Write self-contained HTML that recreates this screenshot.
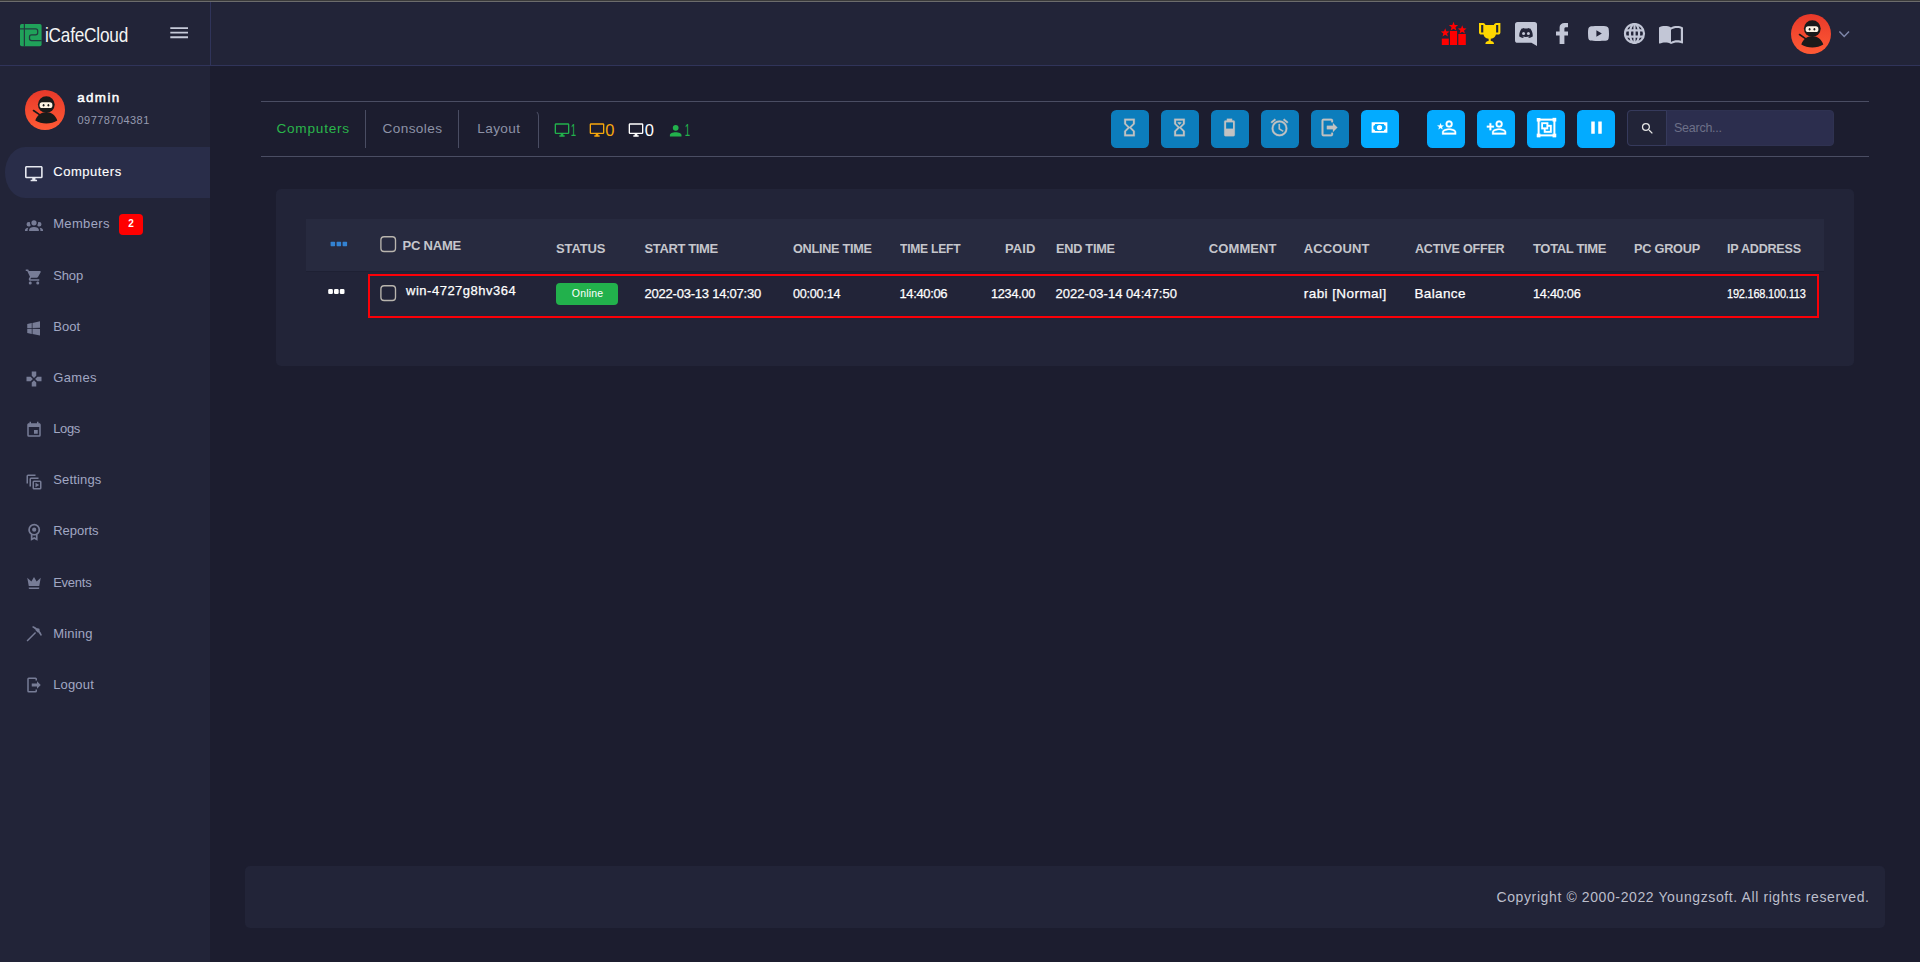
<!DOCTYPE html>
<html lang="en">
<head>
<meta charset="utf-8">
<title>iCafeCloud</title>
<style>
*{box-sizing:border-box;margin:0;padding:0}
html,body{width:1920px;height:962px;overflow:hidden}
body{background:#1c1d2f;font-family:"Liberation Sans",sans-serif;color:#fff;position:relative}
.abs{position:absolute}
.t{position:absolute;white-space:nowrap;line-height:1}
.ic{position:absolute;display:block;overflow:visible}
</style>
</head>
<body>
<div class="abs" style="left:0px;top:0px;width:1920px;height:66px;background:#222438;border-bottom:1px solid #30345a"></div>
<div class="abs" style="left:0px;top:0px;width:1920px;height:1px;background:#3a3a3a"></div>
<div class="abs" style="left:0px;top:1px;width:1920px;height:1px;background:#6c6c6c"></div>
<div class="abs" style="left:0px;top:2px;width:1920px;height:1px;background:#202238"></div>
<div class="abs" style="left:210px;top:2px;width:1px;height:64px;background:#30345a"></div>
<div class="abs" style="left:0px;top:66px;width:210px;height:896px;background:#222438"></div>
<header>
<svg class="ic" style="left:19.9px;top:23.9px" width="21.6" height="22.2" viewBox="0 0 21.6 22.2"><rect x="0" y="0" width="21.6" height="22.2" rx="1.8" fill="#20a25a"/><g stroke="#232a3a" stroke-width="1.25" fill="none" opacity="0.85"><path d="M4.4,0V22.2"/><path d="M0,5H15.6Q17.7,5 17.7,7.1V8.7Q17.7,10.8 15.6,10.8H11.6Q9.500,10.8 9.500,12.9V14.600Q9.500,16.700 11.6,16.700H21.6"/></g></svg>
<div class="t" style="left:44.60px;top:23.82px;font-size:21px;font-weight:400;color:#f4f4f4;letter-spacing:-0.250px;transform:scaleX(0.8189);transform-origin:0 0;">iCafeCloud</div>
<svg class="ic" style="left:170px;top:26px" width="19" height="14" viewBox="0 0 19 14"><path fill="#c6cad9" d="M0.3,1.2h17.7v1.8h-17.7zM0.3,5.800h17.7v1.800h-17.7zM0.3,10.350h17.7v1.800h-17.7z"/></svg>
<svg class="ic" style="left:1441px;top:21px" width="26" height="25" viewBox="0 0 26 25"><g fill="#ff0000"><rect x="0.8" y="17.6" width="7" height="6.4"/><rect x="9" y="10" width="7.1" height="14"/><rect x="17.3" y="13" width="7.5" height="11"/><polygon points="4.20,7.30 5.34,10.34 8.57,10.48 6.04,12.50 6.90,15.62 4.20,13.83 1.50,15.62 2.36,12.50 -0.17,10.48 3.06,10.34"/><polygon points="12.50,0.70 13.71,3.94 17.16,4.09 14.46,6.24 15.38,9.56 12.50,7.66 9.62,9.56 10.54,6.24 7.84,4.09 11.29,3.94"/><polygon points="21.20,4.30 22.34,7.34 25.57,7.48 23.04,9.50 23.90,12.62 21.20,10.83 18.50,12.62 19.36,9.50 16.83,7.48 20.06,7.34"/></g></svg>
<svg class="ic" style="left:1479px;top:23px" width="21.4" height="21" viewBox="2 2 20 20" preserveAspectRatio="none"><path fill="#ffd700" d="M20.2,2H19.5H18C17.1,2 16,3 16,4H8C8,3 6.9,2 6,2H4.5H3.8H2V11C2,12 3,13 4,13H6.2C6.6,15 7.9,16.7 11,17V19.1C8.8,19.3 8,20.4 8,21.7V22H16V21.7C16,20.4 15.2,19.3 13,19.1V17C16.1,16.7 17.4,15 17.8,13H20C21,13 22,12 22,11V2H20.2M4,11V4H6V6V11C5.1,11 4.3,11 4,11M20,11C19.7,11 18.9,11 18,11V6V4H20V11Z"/></svg>
<svg class="ic" style="left:1515px;top:22px" width="22" height="24" viewBox="0 0 22 24"><path fill="#c2c6d6" d="M2.6,0H19.4A2.6,2.6 0 0,1 22,2.6V24L16.4,20.8H2.6A2.6,2.6 0 0,1 0,18.200V2.6A2.6,2.6 0 0,1 2.600,0Z"/><g transform="translate(11 0) scale(1.1 1) translate(-11 0)"><path fill="#222438" d="M14.9,6.600C13.9,6.100 12.800,5.900 12.800,5.900L12.500,6.500C11.500,6.350 10.500,6.350 9.500,6.500L9.200,5.900C9.200,5.900 8.100,6.100 7.100,6.600C5.300,9.300 4.700,12 4.900,14.600C6.100,15.500 7.300,15.900 8.300,16.100L9,15C8.500,14.800 8,14.600 7.600,14.300C9.700,15.300 12.300,15.300 14.400,14.300C14,14.600 13.500,14.800 13,15L13.700,16.100C14.700,15.900 15.900,15.500 17.100,14.600C17.300,12 16.700,9.300 14.900,6.600Z"/><ellipse cx="8.8" cy="11.4" rx="1.35" ry="1.5" fill="#c2c6d6"/><ellipse cx="13.2" cy="11.4" rx="1.35" ry="1.5" fill="#c2c6d6"/></g></svg>
<svg class="ic" style="left:1556px;top:23px" width="12" height="21" viewBox="7 2 10 20" preserveAspectRatio="none"><path fill="#c2c6d6" d="M17,2V2H17V6H15C14.31,6 14,6.81 14,7.5V10H14L17,10V14H14V22H10V14H7V10H10V6A4,4 0 0,1 14,2H17Z"/></svg>
<svg class="ic" style="left:1588px;top:26px" width="21" height="15" viewBox="2 5 20 14" preserveAspectRatio="none"><path fill="#c2c6d6" d="M10,15L15.19,12L10,9V15M21.56,7.17C21.69,7.64 21.78,8.27 21.84,9.07C21.91,9.87 21.94,10.56 21.94,11.16L22,12C22,14.19 21.84,15.8 21.56,16.83C21.31,17.73 20.73,18.31 19.83,18.56C19.36,18.69 18.5,18.78 17.18,18.84C15.88,18.91 14.69,18.94 13.59,18.94L12,19C7.81,19 5.2,18.84 4.17,18.56C3.27,18.31 2.69,17.73 2.44,16.83C2.31,16.36 2.22,15.73 2.16,14.93C2.09,14.13 2.06,13.44 2.06,12.84L2,12C2,9.81 2.16,8.2 2.44,7.17C2.69,6.27 3.27,5.69 4.17,5.44C4.64,5.31 5.5,5.22 6.82,5.16C8.12,5.09 9.31,5.06 10.41,5.06L12,5C16.19,5 18.8,5.16 19.83,5.44C20.73,5.69 21.31,6.27 21.56,7.17Z"/></svg>
<svg class="ic" style="left:1624px;top:23px" width="21" height="21" viewBox="0 0 21 21"><g fill="none" stroke="#c2c6d6" stroke-width="2.2"><circle cx="10.500" cy="10.500" r="9.500"/><ellipse cx="10.500" cy="10.500" rx="4.600" ry="9.500"/><path d="M10.500,1V20M1.800,7.300H19.200M1.800,13.700H19.200"/></g></svg>
<svg class="ic" style="left:1659px;top:26px" width="24" height="18" viewBox="1 4.5 22 17" preserveAspectRatio="none"><path fill="#c2c6d6" d="M21,5C19.89,4.65 18.67,4.5 17.5,4.5C15.55,4.5 13.45,4.9 12,6C10.55,4.9 8.45,4.5 6.5,4.5C4.55,4.5 2.45,4.9 1,6V20.65C1,20.9 1.25,21.15 1.5,21.15C1.6,21.15 1.65,21.1 1.75,21.1C3.1,20.45 5.05,20 6.5,20C8.45,20 10.55,20.4 12,21.5C13.35,20.65 15.8,20 17.5,20C19.15,20 20.85,20.3 22.25,21.05C22.35,21.1 22.4,21.1 22.5,21.1C22.75,21.1 23,20.85 23,20.6V6C22.4,5.55 21.75,5.25 21,5M21,18.5C19.9,18.15 18.7,18 17.5,18C15.8,18 13.35,18.65 12,19.5V8C13.35,7.15 15.8,6.5 17.5,6.5C18.7,6.5 19.9,6.65 21,7V18.5Z"/></svg>
<svg class="ic" style="left:1791px;top:14px" width="40" height="40" viewBox="0 0 40 40"><defs><linearGradient id="g2" x1="0" y1="0" x2="0" y2="1"><stop offset="0" stop-color="#e8392a"/><stop offset="1" stop-color="#ff5a35"/></linearGradient></defs><circle cx="20" cy="20" r="20" fill="url(#g2)"/><path d="M8.5 20.5l6 4.2" stroke="#1a1a1a" stroke-width="1.6" stroke-linecap="round"/><circle cx="21.3" cy="14.6" r="8.4" fill="#1a1a1a"/><path d="M10.3 30.5c1.5-5 5.5-8.3 11-8.3s9.5 3.3 11 8.3c-3 2-7 3-11 3s-8-1-11-3z" fill="#1a1a1a"/><rect x="14.6" y="12.3" width="12.8" height="5.8" rx="2.6" fill="#fdf3e3"/><ellipse cx="18.6" cy="15.2" rx="0.9" ry="1.2" fill="#1a1a1a"/><ellipse cx="23.4" cy="15.2" rx="0.9" ry="1.2" fill="#1a1a1a"/></svg>
<svg class="ic" style="left:1838px;top:30px" width="12" height="8" viewBox="0 0 12 8"><path d="M1.4,1.500L6.200,6.400L11,1.500" fill="none" stroke="#7e86a9" stroke-width="1.5"/></svg>
</header>
<aside>
<svg class="ic" style="left:25px;top:90px" width="40" height="40" viewBox="0 0 40 40"><defs><linearGradient id="g1" x1="0" y1="0" x2="0" y2="1"><stop offset="0" stop-color="#e8392a"/><stop offset="1" stop-color="#ff5a35"/></linearGradient></defs><circle cx="20" cy="20" r="20" fill="url(#g1)"/><path d="M8.5 20.5l6 4.2" stroke="#1a1a1a" stroke-width="1.6" stroke-linecap="round"/><circle cx="21.3" cy="14.6" r="8.4" fill="#1a1a1a"/><path d="M10.3 30.5c1.5-5 5.5-8.3 11-8.3s9.5 3.3 11 8.3c-3 2-7 3-11 3s-8-1-11-3z" fill="#1a1a1a"/><rect x="14.6" y="12.3" width="12.8" height="5.8" rx="2.6" fill="#fdf3e3"/><ellipse cx="18.6" cy="15.2" rx="0.9" ry="1.2" fill="#1a1a1a"/><ellipse cx="23.4" cy="15.2" rx="0.9" ry="1.2" fill="#1a1a1a"/></svg>
<div class="t" style="left:77.20px;top:91.46px;font-size:13.4px;font-weight:400;color:#ffffff;letter-spacing:1.396px;-webkit-text-stroke:0.5px #fff;">admin</div>
<div class="t" style="left:77.50px;top:114.69px;font-size:11px;font-weight:400;color:#969aaf;letter-spacing:0.448px;">09778704381</div>
<div class="abs" style="left:5px;top:146.8px;width:205px;height:51.3px;background:#292d49;border-radius:20px 0 0 20px / 25.600px 0 0 25.600px"></div>
<div class="t" style="left:53.20px;top:165.10px;font-size:13px;font-weight:400;color:#ffffff;letter-spacing:0.554px;-webkit-text-stroke:0.12px #fff;">Computers</div>
<svg class="ic" style="left:25.2px;top:165.700px" width="17.7" height="15.2" viewBox="1 2 22 20" preserveAspectRatio="none"><path fill="#e6e8f0" d="M21,16H3V4H21M21,2H3C1.89,2 1,2.89 1,4V16A2,2 0 0,0 3,18H10V20H8V22H16V20H14V18H21A2,2 0 0,0 23,16V4C23,2.89 22.1,2 21,2Z"/></svg>
<div class="t" style="left:53.20px;top:217.30px;font-size:13px;font-weight:400;color:#a1a7c3;letter-spacing:0.348px;">Members</div>
<svg class="ic" style="left:25.00px;top:215.70px;" width="18" height="18" viewBox="0 0 24 24"><path fill="#777c96" d="M12,5.5A3.5,3.5 0 0,1 15.5,9A3.5,3.5 0 0,1 12,12.5A3.5,3.5 0 0,1 8.5,9A3.5,3.5 0 0,1 12,5.5M5,8C5.56,8 6.08,8.15 6.53,8.42C6.38,9.85 6.8,11.27 7.66,12.38C7.16,13.34 6.16,14 5,14A3,3 0 0,1 2,11A3,3 0 0,1 5,8M19,8A3,3 0 0,1 22,11A3,3 0 0,1 19,14C17.84,14 16.84,13.34 16.34,12.38C17.2,11.27 17.62,9.85 17.47,8.42C17.92,8.15 18.44,8 19,8M5.5,18.25C5.5,16.18 8.41,14.5 12,14.5C15.59,14.5 18.5,16.18 18.5,18.25V20H5.5V18.25M0,20V18.5C0,17.11 1.89,15.94 4.45,15.6C3.86,16.28 3.5,17.22 3.5,18.25V20H0M24,20H20.5V18.25C20.5,17.22 20.14,16.28 19.55,15.6C22.11,15.94 24,17.11 24,18.5V20Z"/></svg>
<div class="t" style="left:53.20px;top:269.30px;font-size:13px;font-weight:400;color:#a1a7c3;letter-spacing:-0.118px;">Shop</div>
<svg class="ic" style="left:25.00px;top:268.30px;" width="18" height="18" viewBox="0 0 24 24"><path fill="#777c96" d="M17,18C15.89,18 15,18.89 15,20A2,2 0 0,0 17,22A2,2 0 0,0 19,20C19,18.89 18.1,18 17,18M1,2V4H3L6.6,11.59L5.24,14.04C5.09,14.32 5,14.65 5,15A2,2 0 0,0 7,17H19V15H7.42A0.25,0.25 0 0,1 7.17,14.75C7.17,14.7 7.18,14.66 7.2,14.63L8.1,13H15.55C16.3,13 16.96,12.58 17.3,11.97L20.88,5.5C20.95,5.34 21,5.17 21,5A1,1 0 0,0 20,4H5.21L4.27,2M7,18C5.89,18 5,18.89 5,20A2,2 0 0,0 7,22A2,2 0 0,0 9,20C9,18.89 8.1,18 7,18Z"/></svg>
<div class="t" style="left:53.20px;top:320.10px;font-size:13px;font-weight:400;color:#a1a7c3;letter-spacing:0.028px;">Boot</div>
<svg class="ic" style="left:25.00px;top:318.60px;" width="18" height="18" viewBox="0 0 24 24"><path fill="#777c96" d="M3,12V6.75L9,5.43V11.91L3,12M20,3V11.75L10,11.9V5.21L20,3M3,13L9,13.09V19.9L3,18.75V13M20,13.25V22L10,20.09V13.1L20,13.25Z"/></svg>
<div class="t" style="left:53.20px;top:371.20px;font-size:13px;font-weight:400;color:#a1a7c3;letter-spacing:0.344px;">Games</div>
<svg class="ic" style="left:25.00px;top:370.20px;" width="18" height="18" viewBox="0 0 24 24"><path fill="#777c96" d="M16.5,9L13.5,12L16.5,15H22V9M9,16.5V22H15V16.5L12,13.5M7.5,9H2V15H7.5L10.5,12M15,7.5V2H9V7.5L12,10.5L15,7.5Z"/></svg>
<div class="t" style="left:53.20px;top:422.30px;font-size:13px;font-weight:400;color:#a1a7c3;letter-spacing:-0.370px;">Logs</div>
<svg class="ic" style="left:25.00px;top:421.10px;" width="18" height="18" viewBox="0 0 24 24"><path fill="#777c96" d="M19,19H5V8H19M16,1V3H8V1H6V3H5C3.89,3 3,3.89 3,5V19A2,2 0 0,0 5,21H19A2,2 0 0,0 21,19V5C21,3.89 20.1,3 19,3H18V1M17,12H12V17H17V12Z"/></svg>
<div class="t" style="left:53.20px;top:473.20px;font-size:13px;font-weight:400;color:#a1a7c3;letter-spacing:0.158px;">Settings</div>
<svg class="ic" style="left:25.00px;top:472.70px;" width="18" height="18" viewBox="0 0 24 24"><path fill="#777c96" d="M4,2A2,2 0 0,0 2,4V14H4V4H14V2H4M8,6A2,2 0 0,0 6,8V18H8V8H18V6H8M12,10A2,2 0 0,0 10,12V20A2,2 0 0,0 12,22H20A2,2 0 0,0 22,20V12A2,2 0 0,0 20,10H12M12,12H20V20H12V12M14,13V19L19,16L14,13Z"/></svg>
<div class="t" style="left:53.20px;top:524.30px;font-size:13px;font-weight:400;color:#a1a7c3;letter-spacing:-0.033px;">Reports</div>
<svg class="ic" style="left:23.90px;top:522.40px;" width="20.4" height="20.4" viewBox="0 0 24 24"><path fill="#777c96" d="M12,2A7,7 0 0,0 5,9C5,11.38 6.19,13.47 8,14.74V22L12,20L16,22V14.74C17.81,13.47 19,11.38 19,9A7,7 0 0,0 12,2M12,4A5,5 0 0,1 17,9A5,5 0 0,1 12,14A5,5 0 0,1 7,9A5,5 0 0,1 12,4M12,6.5A2.5,2.5 0 0,0 9.5,9A2.5,2.5 0 0,0 12,11.5A2.5,2.5 0 0,0 14.500,9A2.5,2.5 0 0,0 12,6.5M10,15.71C10.63,15.9 11.3,16 12,16C12.7,16 13.37,15.9 14,15.71V18.76L12,17.76L10,18.76V15.71Z"/></svg>
<div class="t" style="left:53.20px;top:575.60px;font-size:13px;font-weight:400;color:#a1a7c3;letter-spacing:-0.243px;">Events</div>
<svg class="ic" style="left:25.00px;top:573.90px;" width="18" height="18" viewBox="0 0 24 24"><path fill="#777c96" d="M5,16L3,5L8.5,10L12,4L15.5,10L21,5L19,16H5M19,19A1,1 0 0,1 18,20H6A1,1 0 0,1 5,19V18H19V19Z"/></svg>
<div class="t" style="left:53.20px;top:627.00px;font-size:13px;font-weight:400;color:#a1a7c3;letter-spacing:0.203px;">Mining</div>
<svg class="ic" style="left:25.00px;top:625.00px;" width="18" height="18" viewBox="0 0 24 24"><path fill="#777c96" d="M14.79,10.62L3.5,21.9L2.1,20.5L13.38,9.21L14.79,10.62M19.27,7.73L19.86,7.14L19.07,6.35L19.71,5.71L18.29,4.29L17.65,4.93L16.86,4.14L16.27,4.73C14.53,3.31 12.57,2.17 10.47,1.37L9.64,3.16C11.39,4.08 13,5.19 14.5,6.5L14,7L17,10L17.5,9.5C18.81,11 19.92,12.61 20.84,14.36L22.63,13.53C21.83,11.43 20.69,9.47 19.27,7.73Z"/></svg>
<div class="t" style="left:53.20px;top:678.20px;font-size:13px;font-weight:400;color:#a1a7c3;letter-spacing:0.164px;">Logout</div>
<svg class="ic" style="left:25.00px;top:676.30px;" width="18" height="18" viewBox="0 0 24 24"><path fill="#777c96" d="M16,17V14H9V10H16V7L21,12L16,17M14,2A2,2 0 0,1 16,4V6H14V4H5V20H14V18H16V20A2,2 0 0,1 14,22H5A2,2 0 0,1 3,20V4A2,2 0 0,1 5,2H14Z"/></svg>
<div class="abs" style="left:119px;top:214px;width:24px;height:20.5px;background:#ff0000;border-radius:4px"></div>
<div class="t" style="left:128.30px;top:219.13px;font-size:10px;font-weight:700;color:#ffffff;letter-spacing:0.000px;">2</div>
</aside>
<main>
<div class="abs" style="left:261px;top:101px;width:1608px;height:1px;background:#4a4d63"></div>
<div class="abs" style="left:261px;top:156px;width:1608px;height:1px;background:#4a4d63"></div>
<div class="t" style="left:276.40px;top:121.79px;font-size:13.6px;font-weight:400;color:#2ab54b;letter-spacing:0.787px;">Computers</div>
<div class="abs" style="left:365px;top:110px;width:1px;height:38px;background:#4a4d63"></div>
<div class="t" style="left:382.60px;top:121.79px;font-size:13.6px;font-weight:400;color:#8d92a6;letter-spacing:0.384px;">Consoles</div>
<div class="abs" style="left:458px;top:110px;width:1px;height:38px;background:#4a4d63"></div>
<div class="t" style="left:477.30px;top:121.79px;font-size:13.6px;font-weight:400;color:#8d92a6;letter-spacing:0.366px;">Layout</div>
<div class="abs" style="left:530px;top:110px;width:9px;height:38px;border-right:1px solid #4a4d63;border-top:1px solid transparent;border-top-right-radius:6px"></div>
<svg class="ic" style="left:553.63px;top:121.90px;" width="16" height="16" viewBox="0 0 24 24"><path fill="#22b14c" d="M21,16H3V4H21M21,2H3C1.89,2 1,2.89 1,4V16A2,2 0 0,0 3,18H10V20H8V22H16V20H14V18H21A2,2 0 0,0 23,16V4C23,2.89 22.1,2 21,2Z"/></svg>
<div class="t" style="left:569.90px;top:122.23px;font-size:16.5px;font-weight:400;color:#22b14c;letter-spacing:0.000px;transform:scaleX(0.58);transform-origin:1.8px 0;">1</div>
<svg class="ic" style="left:588.53px;top:121.90px;" width="16" height="16" viewBox="0 0 24 24"><path fill="#f7a70c" d="M21,16H3V4H21M21,2H3C1.89,2 1,2.89 1,4V16A2,2 0 0,0 3,18H10V20H8V22H16V20H14V18H21A2,2 0 0,0 23,16V4C23,2.89 22.1,2 21,2Z"/></svg>
<div class="t" style="left:605.30px;top:122.23px;font-size:16.5px;font-weight:400;color:#f7a70c;letter-spacing:0.000px;">0</div>
<svg class="ic" style="left:628.03px;top:121.90px;" width="16" height="16" viewBox="0 0 24 24"><path fill="#ffffff" d="M21,16H3V4H21M21,2H3C1.89,2 1,2.89 1,4V16A2,2 0 0,0 3,18H10V20H8V22H16V20H14V18H21A2,2 0 0,0 23,16V4C23,2.89 22.1,2 21,2Z"/></svg>
<div class="t" style="left:644.80px;top:122.23px;font-size:16.5px;font-weight:400;color:#ffffff;letter-spacing:0.000px;">0</div>
<svg class="ic" style="left:667.10px;top:121.50px;" width="17.4" height="17.4" viewBox="0 0 24 24"><path fill="#22b14c" d="M12,4A4,4 0 0,1 16,8A4,4 0 0,1 12,12A4,4 0 0,1 8,8A4,4 0 0,1 12,4M12,14C16.42,14 20,15.79 20,18V20H4V18C4,15.79 7.58,14 12,14Z"/></svg>
<div class="t" style="left:684.00px;top:122.23px;font-size:16.5px;font-weight:400;color:#22b14c;letter-spacing:0.000px;transform:scaleX(0.58);transform-origin:1.8px 0;">1</div>
<div class="abs" style="left:1111px;top:110px;width:38px;height:38px;background:#0c7dbc;border-radius:5.5px"></div>
<svg class="ic" style="left:1119.00px;top:117.2px" width="21" height="21" viewBox="0 0 24 24"><path fill="#c2c2c2" stroke="#c2c2c2" stroke-width="0.3" d="M6,2V8H6V8L10,12L6,16V16H6V22H18V16H18V16L14,12L18,8V8H18V2H6M16,16.5V20H8V16.5L12,12.5L16,16.5M12,11.5L8,7.5V4H16V7.5L12,11.5Z"/></svg>
<div class="abs" style="left:1161px;top:110px;width:38px;height:38px;background:#0c7dbc;border-radius:5.5px"></div>
<svg class="ic" style="left:1169.00px;top:117.2px" width="21" height="21" viewBox="0 0 24 24"><path fill="#c2c2c2" stroke="#c2c2c2" stroke-width="0.3" d="M6,2V8H6V8L10,12L6,16V16H6V22H18V16H18V16L14,12L18,8V8H18V2H6M16,16.5V20H8V16.5L12,12.5L16,16.5M12,11.5L8,7.5V4H16V7.5L12,11.5M10,6V6.75L12,8.75L14,6.75V6H10Z"/></svg>
<div class="abs" style="left:1211px;top:110px;width:38px;height:38px;background:#0c7dbc;border-radius:5.5px"></div>
<svg class="ic" style="left:1219.00px;top:117.2px" width="21" height="21" viewBox="0 0 24 24"><path fill="#c2c2c2" stroke="#c2c2c2" stroke-width="0.3" d="M16,13.4H8V6H16M16.67,4H15V2H9V4H7.33A1.33,1.33 0 0,0 6,5.33V20.67C6,21.4 6.6,22 7.33,22H16.67A1.33,1.33 0 0,0 18,20.67V5.33C18,4.6 17.4,4 16.67,4Z"/></svg>
<div class="abs" style="left:1261px;top:110px;width:38px;height:38px;background:#0c7dbc;border-radius:5.5px"></div>
<svg class="ic" style="left:1269.10px;top:117.2px" width="21" height="21" viewBox="0 0 24 24"><path fill="#c2c2c2" stroke="#c2c2c2" stroke-width="0.3" d="M12,20A7,7 0 0,1 5,13A7,7 0 0,1 12,6A7,7 0 0,1 19,13A7,7 0 0,1 12,20M12,4A9,9 0 0,0 3,13A9,9 0 0,0 12,22A9,9 0 0,0 21,13A9,9 0 0,0 12,4M12.5,8H11V14L15.75,16.85L16.5,15.62L12.5,13.25V8M7.88,3.39L6.6,1.86L2,5.71L3.29,7.24L7.88,3.39M22,5.72L17.4,1.86L16.11,3.39L20.71,7.25L22,5.72Z"/></svg>
<div class="abs" style="left:1311px;top:110px;width:38px;height:38px;background:#0c7dbc;border-radius:5.5px"></div>
<svg class="ic" style="left:1319.10px;top:117.2px" width="21" height="21" viewBox="0 0 24 24"><path fill="#c2c2c2" stroke="#c2c2c2" stroke-width="0.3" d="M16,17V14H9V10H16V7L21,12L16,17M14,2A2,2 0 0,1 16,4V6H14V4H5V20H14V18H16V20A2,2 0 0,1 14,22H5A2,2 0 0,1 3,20V4A2,2 0 0,1 5,2H14Z"/></svg>
<div class="abs" style="left:1361px;top:110px;width:38px;height:38px;background:#03abff;border-radius:5.5px"></div>
<svg class="ic" style="left:1369.10px;top:117.2px" width="21" height="21" viewBox="0 0 24 24"><path fill="#ffffff" stroke="#ffffff" stroke-width="0" d="M3,6H21V18H3V6M12,9A3,3 0 0,1 15,12A3,3 0 0,1 12,15A3,3 0 0,1 9,12A3,3 0 0,1 12,9M7,8A2,2 0 0,1 5,10V14A2,2 0 0,1 7,16H17A2,2 0 0,1 19,14V10A2,2 0 0,1 17,8H7Z"/></svg>
<div class="abs" style="left:1427px;top:110px;width:38px;height:38px;background:#03abff;border-radius:5.5px"></div>
<svg class="ic" style="left:1435.80px;top:117.2px" width="21" height="21" viewBox="0 0 24 24"><path fill="#ffffff" stroke="#ffffff" stroke-width="0.3" d="M15,4A4,4 0 0,0 11,8A4,4 0 0,0 15,12A4,4 0 0,0 19,8A4,4 0 0,0 15,4M15,5.9C16.16,5.9 17.1,6.84 17.1,8C17.1,9.16 16.16,10.1 15,10.1A2.1,2.1 0 0,1 12.9,8A2.1,2.1 0 0,1 15,5.9M15,13C12.33,13 7,14.33 7,17V20H23V17C23,14.33 17.67,13 15,13M15,14.9C17.97,14.9 21.1,16.36 21.1,17V18.1H8.9V17C8.9,16.36 12,14.9 15,14.9ZM5.2,7.2L6.15,9.7L8.8,9.83L6.73,11.5L7.43,14.07L5.2,12.6L2.97,14.07L3.67,11.5L1.6,9.83L4.25,9.7Z"/></svg>
<div class="abs" style="left:1477px;top:110px;width:38px;height:38px;background:#03abff;border-radius:5.5px"></div>
<svg class="ic" style="left:1485.80px;top:117.2px" width="21" height="21" viewBox="0 0 24 24"><path fill="#ffffff" stroke="#ffffff" stroke-width="0.3" d="M15,4A4,4 0 0,0 11,8A4,4 0 0,0 15,12A4,4 0 0,0 19,8A4,4 0 0,0 15,4M15,5.9C16.16,5.9 17.1,6.84 17.1,8C17.1,9.16 16.16,10.1 15,10.1A2.1,2.1 0 0,1 12.9,8A2.1,2.1 0 0,1 15,5.9M15,13C12.33,13 7,14.33 7,17V20H23V17C23,14.33 17.67,13 15,13M15,14.9C17.97,14.9 21.1,16.36 21.1,17V18.1H8.9V17C8.9,16.36 12,14.9 15,14.9ZM4,7V10H1V12H4V15H6V12H9V10H6V7H4Z"/></svg>
<div class="abs" style="left:1527px;top:110px;width:38px;height:38px;background:#03abff;border-radius:5.5px"></div>
<svg class="ic" style="left:1535.80px;top:117.2px" width="21" height="21" viewBox="0 0 24 24"><path fill="#ffffff" stroke="#ffffff" stroke-width="0.3" d="M1,1V5H2V19H1V23H5V22H19V23H23V19H22V5H23V1H19V2H5V1M5,4H19V5H20V19H19V20H5V19H4V5H5M6,6V14H9V18H18V9H14V6M8,8H12V12H8M14,11H16V16H11V14H14"/></svg>
<div class="abs" style="left:1577px;top:110px;width:38px;height:38px;background:#03abff;border-radius:5.5px"></div>
<svg class="ic" style="left:1585.80px;top:117.2px" width="21" height="21" viewBox="0 0 24 24"><path fill="#ffffff" stroke="#ffffff" stroke-width="0" d="M14,19H18V5H14M6,19H10V5H6V19Z"/></svg>
<div class="abs" style="left:1627px;top:110px;width:207px;height:36px;background:#2c2e4e;border:1px solid #2f3251;border-radius:4px"></div>
<div class="abs" style="left:1627px;top:110px;width:39.5px;height:36px;background:#222438;border:1px solid #363a5c;border-radius:4px 0 0 4px"></div>
<svg class="ic" style="left:1639.60px;top:120.70px;" width="15" height="15" viewBox="0 0 24 24"><path fill="#e4e4e4" d="M9.5,3A6.5,6.5 0 0,1 16,9.5C16,11.11 15.41,12.59 14.44,13.73L14.71,14H15.5L20.5,19L19,20.5L14,15.5V14.71L13.73,14.44C12.59,15.41 11.11,16 9.5,16A6.5,6.5 0 0,1 3,9.5A6.5,6.5 0 0,1 9.5,3M9.5,5C7,5 5,7 5,9.5C5,12 7,14 9.5,14C12,14 14,12 14,9.5C14,7 12,5 9.5,5Z"/></svg>
<div class="t" style="left:1673.90px;top:121.30px;font-size:13px;font-weight:400;color:#6d7088;letter-spacing:-0.250px;transform:scaleX(0.9600);transform-origin:0 0;">Search...</div>
<div class="abs" style="left:276px;top:188.5px;width:1578px;height:177.5px;background:#222438;border-radius:5px"></div>
<div class="abs" style="left:306px;top:218.8px;width:1518px;height:52px;background:#272a3f"></div>
<div class="abs" style="left:306px;top:270.5px;width:1518px;height:1px;background:#1e2033"></div>
<svg class="ic" style="left:330px;top:241px" width="18" height="6" viewBox="0 0 18 6"><g fill="#3382d2"><rect x="0.6" y="0.8" width="4.5" height="4.4" rx="0.6"/><rect x="6.6" y="0.8" width="4.5" height="4.4" rx="0.6"/><rect x="12.6" y="0.8" width="4.5" height="4.4" rx="0.6"/></g></svg>
<svg class="ic" style="left:379px;top:234.9px" width="18" height="18" viewBox="0 0 18 18"><rect x="1.9" y="1.700" width="14.6" height="14.8" rx="3.2" fill="none" stroke="#b9b5ae" stroke-width="1.35"/></svg>
<svg class="ic" style="left:379px;top:284px" width="18" height="18" viewBox="0 0 18 18"><rect x="1.9" y="1.700" width="14.6" height="14.8" rx="3.2" fill="none" stroke="#b9b5ae" stroke-width="1.35"/></svg>
<div class="t" style="left:402.50px;top:239.00px;font-size:13px;font-weight:700;color:#c5c6cc;letter-spacing:-0.205px;">PC NAME</div>
<div class="t" style="left:556.00px;top:242.20px;font-size:13px;font-weight:700;color:#c5c6cc;letter-spacing:-0.110px;">STATUS</div>
<div class="t" style="left:644.50px;top:242.20px;font-size:13px;font-weight:700;color:#c5c6cc;letter-spacing:-0.369px;">START TIME</div>
<div class="t" style="left:792.50px;top:242.20px;font-size:13px;font-weight:700;color:#c5c6cc;letter-spacing:-0.250px;transform:scaleX(0.9719);transform-origin:0 0;">ONLINE TIME</div>
<div class="t" style="left:899.50px;top:242.20px;font-size:13px;font-weight:700;color:#c5c6cc;letter-spacing:-0.250px;transform:scaleX(0.9287);transform-origin:0 0;">TIME LEFT</div>
<div class="t" style="left:1005.00px;top:242.20px;font-size:13px;font-weight:700;color:#c5c6cc;letter-spacing:0.135px;">PAID</div>
<div class="t" style="left:1055.50px;top:242.20px;font-size:13px;font-weight:700;color:#c5c6cc;letter-spacing:-0.250px;transform:scaleX(0.9770);transform-origin:0 0;">END TIME</div>
<div class="t" style="left:1208.80px;top:242.20px;font-size:13px;font-weight:700;color:#c5c6cc;letter-spacing:0.093px;">COMMENT</div>
<div class="t" style="left:1303.80px;top:242.20px;font-size:13px;font-weight:700;color:#c5c6cc;letter-spacing:0.117px;">ACCOUNT</div>
<div class="t" style="left:1414.50px;top:242.20px;font-size:13px;font-weight:700;color:#c5c6cc;letter-spacing:-0.250px;transform:scaleX(0.9686);transform-origin:0 0;">ACTIVE OFFER</div>
<div class="t" style="left:1533.00px;top:242.20px;font-size:13px;font-weight:700;color:#c5c6cc;letter-spacing:-0.341px;">TOTAL TIME</div>
<div class="t" style="left:1634.00px;top:242.20px;font-size:13px;font-weight:700;color:#c5c6cc;letter-spacing:-0.250px;transform:scaleX(0.9792);transform-origin:0 0;">PC GROUP</div>
<div class="t" style="left:1727.00px;top:242.20px;font-size:13px;font-weight:700;color:#c5c6cc;letter-spacing:-0.250px;transform:scaleX(0.9678);transform-origin:0 0;">IP ADDRESS</div>
<svg class="ic" style="left:328px;top:288px" width="18" height="7" viewBox="0 0 18 7"><g fill="#ffffff"><rect x="0.2" y="1.1" width="4.700" height="5" rx="1.3"/><rect x="6" y="1.1" width="4.700" height="5" rx="1.3"/><rect x="11.8" y="1.1" width="4.700" height="5" rx="1.3"/></g></svg>
<div class="abs" style="left:368px;top:274px;width:1451px;height:44px;border:2px solid #fb0007"></div>
<div class="t" style="left:406.06px;top:283.60px;font-size:13px;font-weight:400;color:#ffffff;letter-spacing:0.507px;-webkit-text-stroke:0.25px #fff;">win-4727g8hv364</div>
<div class="abs" style="left:556px;top:283px;width:62px;height:22px;background:#22b14c;border-radius:4px"></div>
<div class="t" style="left:571.80px;top:287.91px;font-size:10.5px;font-weight:400;color:#ffffff;letter-spacing:0.171px;">Online</div>
<div class="t" style="left:644.50px;top:287.20px;font-size:13px;font-weight:400;color:#ffffff;letter-spacing:-0.222px;-webkit-text-stroke:0.25px #fff;">2022-03-13 14:07:30</div>
<div class="t" style="left:792.50px;top:287.20px;font-size:13px;font-weight:400;color:#ffffff;letter-spacing:-0.250px;-webkit-text-stroke:0.25px #fff;transform:scaleX(0.9717);transform-origin:0 0;">00:00:14</div>
<div class="t" style="left:899.50px;top:287.20px;font-size:13px;font-weight:400;color:#ffffff;letter-spacing:-0.376px;-webkit-text-stroke:0.25px #fff;">14:40:06</div>
<div class="t" style="left:991.20px;top:287.20px;font-size:13px;font-weight:400;color:#ffffff;letter-spacing:-0.250px;-webkit-text-stroke:0.25px #fff;transform:scaleX(0.9737);transform-origin:0 0;">1234.00</div>
<div class="t" style="left:1055.50px;top:287.20px;font-size:13px;font-weight:400;color:#ffffff;letter-spacing:0.044px;-webkit-text-stroke:0.25px #fff;">2022-03-14 04:47:50</div>
<div class="t" style="left:1303.80px;top:286.77px;font-size:13.5px;font-weight:400;color:#ffffff;letter-spacing:0.426px;-webkit-text-stroke:0.25px #fff;">rabi [Normal]</div>
<div class="t" style="left:1414.50px;top:286.77px;font-size:13.5px;font-weight:400;color:#ffffff;letter-spacing:0.366px;-webkit-text-stroke:0.25px #fff;">Balance</div>
<div class="t" style="left:1533.00px;top:287.20px;font-size:13px;font-weight:400;color:#ffffff;letter-spacing:-0.250px;-webkit-text-stroke:0.25px #fff;transform:scaleX(0.9778);transform-origin:0 0;">14:40:06</div>
<div class="t" style="left:1727.00px;top:287.20px;font-size:13px;font-weight:400;color:#ffffff;letter-spacing:-0.250px;-webkit-text-stroke:0.25px #fff;transform:scaleX(0.8459);transform-origin:0 0;">192.168.100.113</div>
</main>
<footer>
<div class="abs" style="left:245px;top:866px;width:1640px;height:62px;background:#222438;border-radius:5px"></div>
<div class="t" style="left:1496.50px;top:890.05px;font-size:14px;font-weight:400;color:#bcbecb;letter-spacing:0.607px;">Copyright © 2000-2022 Youngzsoft. All rights reserved.</div>
</footer>
</body>
</html>
